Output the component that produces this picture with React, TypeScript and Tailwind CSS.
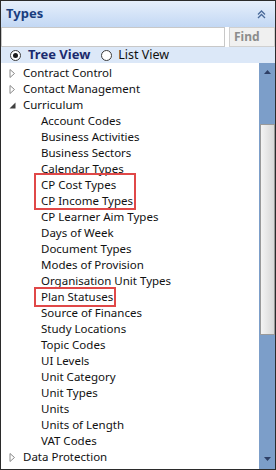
import React from "react";

const children = [
  "Account Codes",
  "Business Activities",
  "Business Sectors",
  "Calendar Types",
  "CP Cost Types",
  "CP Income Types",
  "CP Learner Aim Types",
  "Days of Week",
  "Document Types",
  "Modes of Provision",
  "Organisation Unit Types",
  "Plan Statuses",
  "Source of Finances",
  "Study Locations",
  "Topic Codes",
  "UI Levels",
  "Unit Category",
  "Unit Types",
  "Units",
  "Units of Length",
  "VAT Codes",
];

function Collapsed() {
  return (
    <svg width="7" height="9" viewBox="0 0 7 9" className="shrink-0">
      <path d="M1 0.5 L5.5 4.5 L1 8.5 Z" fill="white" stroke="#8a8a8a" strokeWidth="1" />
    </svg>
  );
}

function Expanded() {
  return (
    <svg width="7" height="7" viewBox="0 0 7 7" className="shrink-0">
      <path d="M6.5 0.5 L6.5 6.5 L0.5 6.5 Z" fill="#404040" />
    </svg>
  );
}

function TopRow({ label, open }: { label: string; open?: boolean }) {
  return (
    <div className="flex h-4 items-center">
      <div className="flex w-[22px] justify-start pl-[8px]">{open ? <Expanded /> : <Collapsed />}</div>
      <span>{label}</span>
    </div>
  );
}

export default function App() {
  return (
    <div
      className="flex h-[470px] w-[276px] flex-col overflow-hidden border border-[#2b2b2b] bg-white text-[11.5px] text-[#111]"
      style={{ fontFamily: '"Noto Sans", sans-serif' }}
    >
      {/* header */}
      <div className="flex h-[26px] shrink-0 items-center justify-between bg-gradient-to-b from-[#e6effb] to-[#c3d8f4] pl-[5px] pr-[9px]">
        <span className="text-[13px] font-bold text-[#1a3e7f]">Types</span>
        <svg width="9" height="9" viewBox="0 0 9 9">
          <path d="M1 4.5 L4.5 1 L8 4.5 M1 8 L4.5 4.5 L8 8" fill="none" stroke="#4a6a9a" strokeWidth="1.3" />
        </svg>
      </div>
      {/* search row */}
      <div className="flex h-[20px] shrink-0 items-stretch bg-white">
        <div className="w-[224px] border border-[#c8c8c8] bg-white" />
        <div className="ml-[4px] flex flex-1 items-center border border-[#d0d0d0] bg-[#f0f0f0] pl-[4px] text-[12px] font-bold text-[#8c8c8c]">
          Find
        </div>
      </div>
      {/* radio row */}
      <div className="flex h-[16px] shrink-0 items-center bg-[#dce8f8] pl-[9px]">
        <div className="flex h-[11px] w-[11px] items-center justify-center rounded-full border border-[#3c3c3c] bg-white">
          <div className="h-[5px] w-[5px] rounded-full bg-[#1a1a1a]" />
        </div>
        <span className="ml-[7px] text-[13px] font-bold text-[#1b2b6e]">Tree View</span>
        <div className="ml-[11px] h-[11px] w-[11px] rounded-full border border-[#3c3c3c] bg-white" />
        <span className="ml-[6px] text-[12.5px]">List View</span>
      </div>
      {/* tree + scrollbar */}
      <div className="flex min-h-0 flex-1">
        <div className="relative flex-1 pt-[2px]">
          <TopRow label="Contract Control" />
          <TopRow label="Contact Management" />
          <TopRow label="Curriculum" open />
          {children.map((c) => (
            <div key={c} className="flex h-4 items-center pl-[40px]">
              {c}
            </div>
          ))}
          <TopRow label="Data Protection" />
          <div className="absolute left-[33px] top-[110px] h-[37px] w-[102px] border-2 border-[#e04848]" />
          <div className="absolute left-[33px] top-[224px] h-[20px] w-[82px] border-2 border-[#e04848]" />
        </div>
        <div className="flex w-[16px] shrink-0 flex-col items-center bg-[#7c9ec9]">
          <svg width="7" height="4" viewBox="0 0 7 4" className="mt-[7px]">
            <path d="M0 4 L3.5 0 L7 4 Z" fill="#2e3f66" />
          </svg>
          <div className="mt-[50px] h-[211px] w-[15px] border border-[#9a9a9a] bg-gradient-to-r from-[#f4f4f4] to-[#d8d8d8]" />
          <div className="flex-1" />
          <svg width="7" height="4" viewBox="0 0 7 4" className="mb-[8px]">
            <path d="M0 0 L3.5 4 L7 0 Z" fill="#2e3f66" />
          </svg>
        </div>
      </div>
    </div>
  );
}
